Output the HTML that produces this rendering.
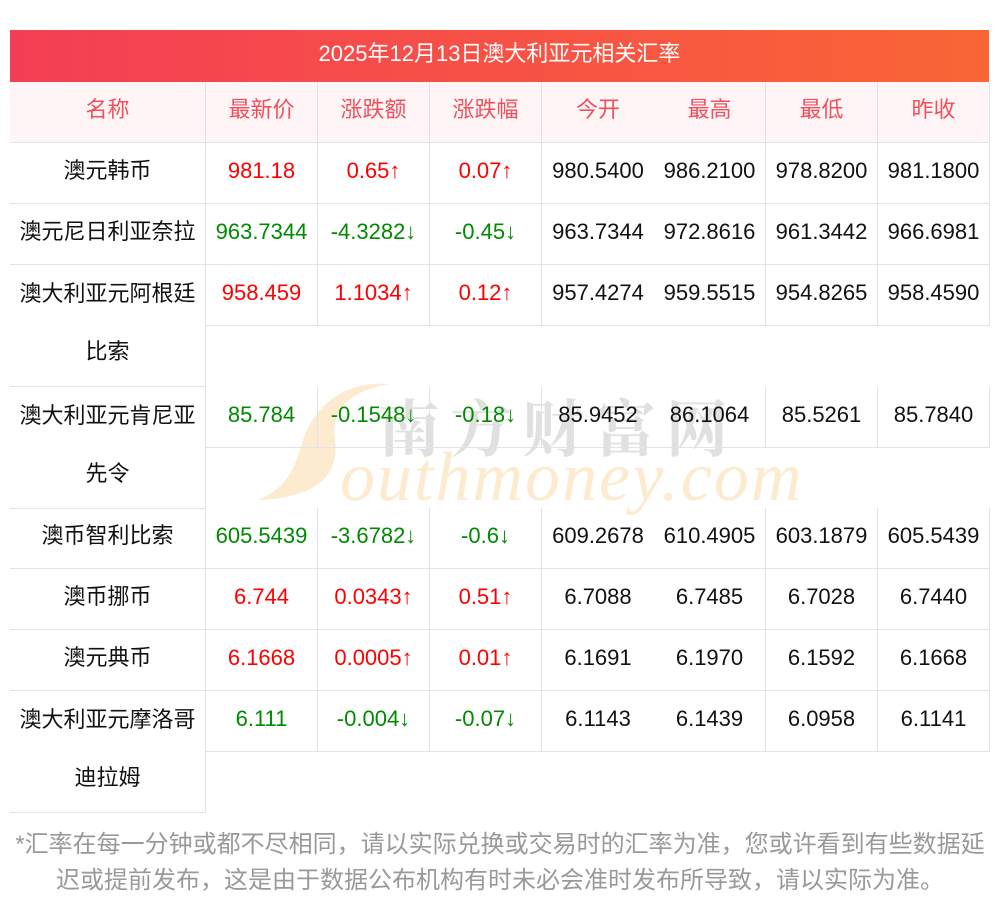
<!DOCTYPE html>
<html><head><meta charset="utf-8">
<style>
*{margin:0;padding:0;box-sizing:border-box}
body{width:1000px;height:913px;background:#fff;position:relative;overflow:hidden;font-family:"Liberation Sans","Noto Sans CJK SC",sans-serif;font-size:22px;color:#111}
.t{position:absolute;left:10px;top:30px;width:979px;height:52px;background:linear-gradient(90deg,#f43e55,#fa6536);color:#fff;text-align:center;line-height:48px;font-size:22px}
.c{position:absolute;text-align:center;line-height:56px;height:61px;border-bottom:1px solid #e2e2ec;border-right:1px solid #e2e2ec;white-space:nowrap;z-index:2}
.h{background:#fff5f6;color:#f0505c}
.r{color:#f00}.g{color:#008a00}
.tall{height:122px;white-space:normal;line-height:58px}
.wm1{position:absolute;left:378px;top:380px;font-size:62px;color:#c8c8c8;opacity:.55;letter-spacing:10px;z-index:1;font-family:"Noto Serif CJK SC",serif;font-weight:bold}
.wm2{position:absolute;left:340px;top:438px;font-size:70px;color:#fdebd0;font-style:italic;font-family:"Liberation Serif",serif;z-index:1;letter-spacing:2px}
.foot{position:absolute;left:0;top:827px;width:1000px;text-align:center;color:#999;font-size:24px;line-height:36px;white-space:nowrap}
</style></head><body>
<div class="t">2025年12月13日澳大利亚元相关汇率</div>
<svg style="position:absolute;left:250px;top:380px;z-index:1" width="150" height="125"><path d="M140 4 C90 0 60 30 50 70 C40 100 30 110 8 120 C60 118 90 100 85 60 C80 30 100 10 140 4 Z" fill="#fdebd0"/></svg>
<div class="wm1">南方财富网</div>
<div class="wm2">outhmoney.com</div>
<div id="tb"></div>
<div class="foot">*汇率在每一分钟或都不尽相同，请以实际兑换或交易时的汇率为准，您或许看到有些数据延<br>迟或提前发布，这是由于数据公布机构有时未必会准时发布所导致，请以实际为准。</div>
<script>
var X=[10,206,318,430,542,654,766,878,990];
var rows=[
["h",82,false,["名称","最新价","涨跌额","涨跌幅","今开","最高","最低","昨收"]],
["r",142,false,["澳元韩币","981.18","0.65↑","0.07↑","980.5400","986.2100","978.8200","981.1800"]],
["g",203,false,["澳元尼日利亚奈拉","963.7344","-4.3282↓","-0.45↓","963.7344","972.8616","961.3442","966.6981"]],
["r",264,true,["澳大利亚元阿根廷比索","958.459","1.1034↑","0.12↑","957.4274","959.5515","954.8265","958.4590"]],
["g",386,true,["澳大利亚元肯尼亚先令","85.784","-0.1548↓","-0.18↓","85.9452","86.1064","85.5261","85.7840"]],
["g",507,false,["澳币智利比索","605.5439","-3.6782↓","-0.6↓","609.2678","610.4905","603.1879","605.5439"]],
["r",568,false,["澳币挪币","6.744","0.0343↑","0.51↑","6.7088","6.7485","6.7028","6.7440"]],
["r",629,false,["澳元典币","6.1668","0.0005↑","0.01↑","6.1691","6.1970","6.1592","6.1668"]],
["g",690,true,["澳大利亚元摩洛哥迪拉姆","6.111","-0.004↓","-0.07↓","6.1143","6.1439","6.0958","6.1141"]]
];
var h="";
rows.forEach(function(r){
 for(var i=0;i<8;i++){
  var w=X[i+1]-X[i]; var cls="c";
  if(r[0]=="h")cls+=" h"; else if(i>=1&&i<=3)cls+=" "+r[0];
  if(i==0&&r[2])cls+=" tall";
  var st="left:"+X[i]+"px;top:"+(r[1]+1)+"px;width:"+w+"px;";
  if(r[0]=="h")st="left:"+X[i]+"px;top:"+r[1]+"px;width:"+w+"px;height:61px;";
  if(i==4)st+="border-right:none;";
  var txt=r[3][i];
  if(i==0&&r[2]){var a=txt.slice(0,8);var b=txt.slice(8);txt=a+"<br>"+b;}
  h+='<div class="'+cls+'" style="'+st+'">'+txt+'</div>';
 }
});
document.getElementById("tb").innerHTML=h;
</script>
</body></html>
